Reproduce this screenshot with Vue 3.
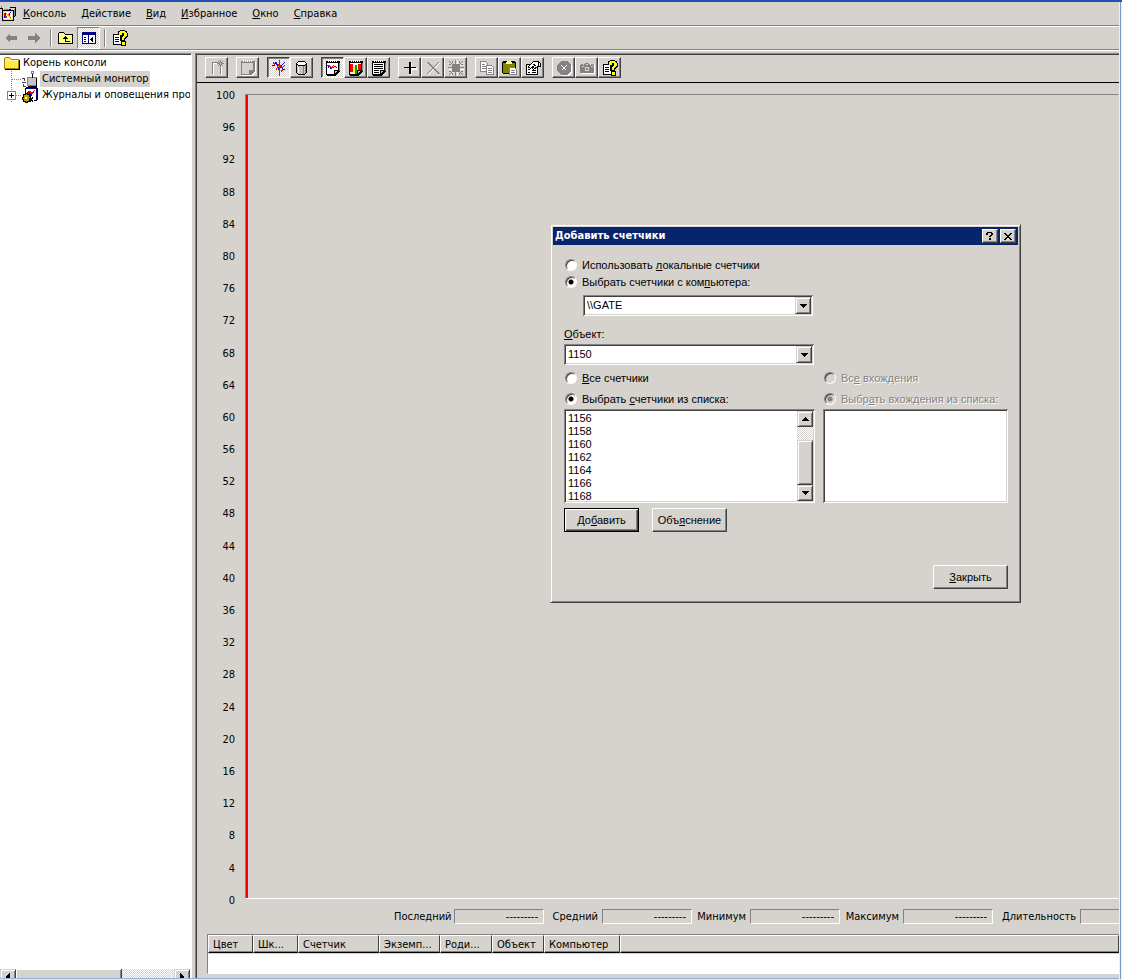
<template>
  <div class="screen">
    <div class="console">
      <nav class="menu-bar">
        <Icon name="console" />
        <button v-for="item in menu" :key="item[1]" type="button" class="menu-item">
          <u>{{ item[0] }}</u>{{ item[1] }}
        </button>
      </nav>

      <div class="main-toolbar">
        <button type="button" class="flat" aria-label="Назад" disabled><Icon name="back" /></button>
        <button type="button" class="flat" aria-label="Вперед" disabled><Icon name="forward" /></button>
        <span class="separator"></span>
        <button type="button" class="flat" aria-label="Вверх"><Icon name="up" /></button>
        <button type="button" class="flat pressed" aria-label="Дерево консоли"><Icon name="tree" /></button>
        <span class="separator"></span>
        <button type="button" class="flat" aria-label="Справка"><Icon name="help" /></button>
      </div>

      <div class="panes">
        <aside class="tree-pane">
          <ul class="tree">
            <li class="tree-root"><Icon name="folder" /><span>Корень консоли</span></li>
            <li class="tree-row">
              <span class="branch"></span>
              <Icon name="monitor" />
              <span class="tree-label selected">Системный монитор</span>
            </li>
            <li class="tree-row">
              <span class="branch"><button type="button" class="expander" aria-label="Развернуть"></button></span>
              <Icon name="logs" />
              <span class="tree-label">Журналы и оповещения производительности</span>
            </li>
          </ul>
          <div class="h-scroll">
            <span class="scroll-btn"><Icon name="arrowLeft" /></span>
            <span class="h-thumb"></span>
            <span class="h-track"></span>
            <span class="scroll-btn"><Icon name="arrowRight" /></span>
          </div>
        </aside>

        <main class="monitor">
          <div class="monitor-toolbar">
            <div v-for="(group, i) in tools" :key="i" class="tool-group">
              <button
                v-for="tool in group"
                :key="tool.icon"
                type="button"
                class="tool"
                :class="{ pressed: tool.pressed }"
                :aria-label="tool.label"
              >
                <Icon :name="tool.icon" />
              </button>
            </div>
          </div>

          <div class="chart">
            <div class="axis">
              <span v-for="n in axis" :key="n">{{ n }}</span>
            </div>
            <div class="plot"></div>
          </div>

          <div class="stats">
            <template v-for="name in stats" :key="name">
              <span>{{ name }}</span>
              <output>---------</output>
            </template>
          </div>

          <div class="legend">
            <table>
              <colgroup>
                <col v-for="col in columns" :key="col.name" :style="{ width: col.width + 'px' }" />
                <col />
              </colgroup>
              <thead>
                <tr>
                  <th v-for="col in columns" :key="col.name">{{ col.name }}</th>
                  <th></th>
                </tr>
              </thead>
              <tbody>
                <tr><td colspan="8"></td></tr>
              </tbody>
            </table>
          </div>
        </main>
      </div>
    </div>

    <section class="dialog" role="dialog" aria-labelledby="dialog-title">
      <header class="title-bar">
        <h1 id="dialog-title">Добавить счетчики</h1>
        <button type="button" aria-label="Справка"><Icon name="question" /></button>
        <button type="button" aria-label="Закрыть окно"><Icon name="close" /></button>
      </header>

      <form class="dialog-body" @submit.prevent>
        <label class="radio">
          <input v-model="source" type="radio" name="source" value="local" />
          <span>Использовать <u>л</u>окальные счетчики</span>
        </label>
        <label class="radio">
          <input v-model="source" type="radio" name="source" value="computer" />
          <span>Выбрать счетчики с ком<u>п</u>ьютера:</span>
        </label>
        <div class="combo computer">
          <select v-model="computer" aria-label="Компьютер">
            <option>\\GATE</option>
          </select>
          <span class="combo-btn"><Icon name="arrowDown" /></span>
        </div>

        <label class="field-label" for="object"><u>О</u>бъект:</label>
        <div class="combo">
          <select id="object" v-model="object">
            <option>1150</option>
          </select>
          <span class="combo-btn"><Icon name="arrowDown" /></span>
        </div>

        <div class="columns">
          <div class="column">
            <label class="radio">
              <input v-model="counters" type="radio" name="counters" value="all" />
              <span><u>В</u>се счетчики</span>
            </label>
            <label class="radio">
              <input v-model="counters" type="radio" name="counters" value="list" />
              <span>Выбрать <u>с</u>четчики из списка:</span>
            </label>
            <div class="list-box">
              <select v-model="counter" size="7" aria-label="Счетчики">
                <option v-for="id in counterList" :key="id" :value="id">{{ id }}</option>
              </select>
              <div class="v-scroll">
                <span class="scroll-btn"><Icon name="arrowUp" /></span>
                <span class="v-track"></span>
                <span class="v-thumb"></span>
                <span class="scroll-btn"><Icon name="arrowDown" /></span>
              </div>
            </div>
          </div>
          <div class="column">
            <label class="radio disabled">
              <input v-model="instances" type="radio" name="instances" value="all" disabled />
              <span>Вс<u>е</u> вхождения</span>
            </label>
            <label class="radio disabled">
              <input v-model="instances" type="radio" name="instances" value="list" disabled />
              <span>Выбр<u>а</u>ть вхождения из списка:</span>
            </label>
            <div class="list-box">
              <select size="7" aria-label="Вхождения" disabled></select>
            </div>
          </div>
        </div>

        <div class="actions">
          <button type="button" class="push default">До<u>б</u>авить</button>
          <button type="button" class="push">Объ<u>я</u>снение</button>
        </div>
        <div class="actions end">
          <button type="button" class="push"><u>З</u>акрыть</button>
        </div>
      </form>
    </section>
  </div>
</template>

<script setup>
import { h, ref } from "vue";

// every icon is a list of [fill, stroke, path] layers on a 16x16 grid
const notebook = [
  ["#000", "none", "M1 1h14v11h-1v1h-1v1h-1v1h-1v1H2v-1H1z"],
  ["#fff", "none", "M2 3h11v7h-4v4H2z"],
  ["#c6c3c6", "none", "M10 11h2v1h-1v1h-1z"],
  ["none", "#fff", "M3.5 0v2M5.5 0v2M7.5 0v2M9.5 0v2M11.5 0v2"],
  ["none", "#848284", "M14.5 3v8"],
];

const helpPage = [
  ["#fff", "#000", "M1.5 4.5h8v10h-8z"],
  ["none", "#000", "M3 7.5h4M3 9.5h4M3 11.5h4"],
  ["#000", "none", "M6 1h2V0h5v1h2v2h1v4h-1v1h-1v1h-1v2h1v5H9v-5H8V5H6z"],
  ["#ffff00", "none", "M7 2h1V1h5v1h1v1h1v3h-1v1h-1v1h-1v2h-2V7h1V6h1V3h-2v2H7zM10 12h3v3h-3z"],
];

const icons = {
  console: [
    ["#d6d3ce", "#000", "M2.5 4.5h11v10h-11z"],
    ["#fff", "none", "M4 6h8v7H4z"],
    ["none", "#000", "M0 2.5h3M2.5 3v2M5 3.5h6M9.5 1.5h6v8l-2 2"],
    ["none", "#848284", "M1.5 0v2M14.5 3v7M4 3.5h5"],
    ["none", "#0000ff", "M4 12l2-5 2 3 3-4"],
    ["none", "#ff0000", "M4 7l2 5 2-4 3 4"],
    ["none", "#e8d800", "M4 5l8 9"],
  ],
  back: [["#848284", "none", "M1 8l5-5v3h7v4H6v3z"]],
  forward: [["#848284", "none", "M13 8L8 3v3H1v4h7v3z"]],
  up: [
    ["#ffff84", "#000", "M.5 13.5V3.5l1-1h4l2 2h7v9z"],
    ["none", "#000", "M7.5 6v5.5h4M5 8.5h5M6 7.5h3"],
  ],
  tree: [
    ["#fff", "#000084", "M1.5 2.5h13v11h-13z"],
    ["#000084", "none", "M1 2h14v3H1zM7 5h1v9H7z"],
    ["none", "#000084", "M3 7.5h2M3 9.5h2M3 11.5h2"],
    ["#000", "none", "M12 6v7L9 9.5z"],
  ],
  help: helpPage,
  helpTool: helpPage,
  folder: [
    ["#ffe84a", "#a08000", "M.5 13.5V3.5l1-1h4l2 2h7v9z"],
    ["none", "#fff8b0", "M2 5.5h12"],
    ["none", "#000", "M1 14.5h14.5V5"],
  ],
  monitor: [
    ["#c6c3c6", "#848284", "M5.5 6.5h9v8h-9z"],
    ["none", "#000", "M10.5 2v5M14.5 7v8H6"],
    ["#fff", "#848284", "M9.5.5h2v2h-2z"],
    ["none", "#424142", "M0 7.5h3M2.5 8v2M0 11.5h4M1.5 13v2h2"],
  ],
  logs: [
    ["#fff", "#000084", "M3.5 1.5h11v12h-11z"],
    ["none", "#000", "M4 .5h11M15.5 1v11l-2 2"],
    ["none", "#0000ff", "M5 6l2-2 2 5 3-5"],
    ["none", "#ff0000", "M5 8l3-4 2 3 3-4"],
    ["#c0a000", "#000", "M1.5 7.5h2v-1h2v1h2v2h1v2h-1v3h-2v1h-2v-1h-2v-2h-1v-2h1z"],
    ["#fff", "none", "M3 10h2v2H3zM8 11h4v4H8z"],
    ["none", "#000", "M8 11l3 4M11 10l-3 5"],
  ],
  newSet: [
    ["none", "#fff", "M4.5 15V3.5h5M12.5 15V7"],
    ["none", "#848284", "M3.5 14V2.5h5M11.5 14V6M8 3.5h7M11.5 0v7M9 1l5 5M14 1L9 6"],
    ["#d6d3ce", "none", "M11 3h1v1h-1z"],
  ],
  clear: [
    ["#fff", "none", "M2 2h14v11h-1v1h-1v1h-1v1H2z"],
    ["#848284", "none", "M1 1h14v11h-1v1h-1v1h-1v1H1z"],
    ["#d6d3ce", "none", "M2 3h11v7h-4v4H2z"],
    ["none", "#fff", "M3.5 0v2M5.5 0v2M7.5 0v2M9.5 0v2M11.5 0v2"],
  ],
  activity: [
    ["none", "#0000ff", "M1 5.5h2l2-3 1 2 2 5 2-4 2 4h2M11 5l3-3"],
    ["none", "#ff0000", "M8.5 0v16M2 2l2 3M5 10l3-6 3 4 3-3M10 12l2-3"],
  ],
  database: [
    ["#c6c3c6", "#000", "M2.5 3.5l2-2h6l2 2v9l-2 2h-6l-2-2z"],
    ["#fff", "#000", "M2.5 3.5l2-2h6l2 2-2 2h-6z"],
    ["none", "#fff", "M4.5 7v6"],
    ["none", "#848284", "M9.5 6v8M11.5 5v8"],
  ],
  graph: [
    ...notebook,
    ["#ff0000", "none", "M2 5h3v1h1v1h1V6h1V5h1v1h1v1H9V6H8v2H6V7H4V6H2z"],
    ["#0000ff", "none", "M3 6h1v2H3zM5 7h1v1h1v1H5zM8 7h1v1H8zM10 6h1v1h-1zM11 7h1v1h-1z"],
  ],
  histogram: [
    ...notebook,
    ["#ff0000", "none", "M2 4h3v8H2zM10 4h3v6h-3z"],
    ["#ffff00", "none", "M5 7h2v6H5z"],
    ["#00a000", "none", "M7 5h2v9H7z"],
  ],
  report: [...notebook, ["none", "#000", "M3 4.5h9M3 6.5h9M3 8.5h9M3 10.5h5M3 12.5h5"]],
  add: [
    ["#fff", "none", "M8 3h2v5h5v2h-5v5H8z"],
    ["#000", "none", "M7 2h2v5h5v1H9v6H7V8H2V7h5z"],
  ],
  remove: [
    ["none", "#fff", "M3 3l12 12M15 3L3 15"],
    ["none", "#848284", "M2 2l12 12M3 2l12 12M14 2L2 14"],
  ],
  highlight: [
    ["none", "#fff", "M1 9h15M9 1v15M3 3l12 12M15 3L3 15"],
    ["#848284", "none", "M4 5h1V4h6v1h1v6h-1v1H5v-1H4z"],
    ["none", "#848284", "M0 7.5h16M7.5 0v16M1 1l4 4M15 1l-4 4M1 15l4-4M15 15l-4-4M1 4.5h2M13 4.5h2M1 11.5h2M13 11.5h2M4.5 1v2M11.5 1v2M4.5 13v2M11.5 13v2"],
  ],
  copy: [
    ["#fff", "#848284", "M1.5 1.5h5l2 2v8h-7z"],
    ["none", "#848284", "M3 4.5h3M3 6.5h4M3 8.5h4"],
    ["#fff", "#848284", "M7.5 5.5h5l2 2v7h-7z"],
    ["none", "#848284", "M9 8.5h4M9 10.5h4M9 12.5h4"],
  ],
  paste: [
    ["#000", "none", "M1 1h12v1h1v12H1v-1H0V2h1z"],
    ["#848200", "none", "M1 3h12v10H1z"],
    ["#ffff84", "none", "M4 2h1V1h4v1h1v2H4z"],
    ["#fff", "#848284", "M7.5 7.5h5l2 2v5h-7z"],
    ["none", "#848284", "M9 10.5h4M9 12.5h4"],
  ],
  properties: [
    ["#fff", "#000", "M1.5 4.5h11v10h-11z"],
    ["none", "#000", "M3 7.5h1M3 9.5h2M7 10.5h4M3 12.5h2M7 12.5h4"],
    ["#fff", "#000", "M3.5 6.5l5-5h4l3 2v3h-3l-4 3-1-1 2-3-4 3-1-1z"],
    ["none", "#000", "M13.5 1v6M8 4l3 2"],
  ],
  stop: [
    ["#fff", "none", "M6 2h6l4 4v6l-4 4H6l-4-4V6z"],
    ["#848284", "none", "M5 1h6l4 4v6l-4 4H5l-4-4V5z"],
    ["none", "#fff", "M5.5 5.5l5 5M10.5 5.5l-5 5"],
  ],
  camera: [
    ["#fff", "none", "M2 5h4l1-2h4l1 2h4v9H2z"],
    ["#848284", "none", "M1 5h1V4h2v1h1l1-2h4l1 2h1V4h2v1h1v8H1z"],
    ["none", "#d6d3ce", "M6.5 7.5h3v3h-3zM3 6.5h2M12 6.5h2M7 4.5h2"],
  ],
  question: [["#000", "none", "M5 4h5v1h1v2h-1v1H9v1H7V8h1V7h1V5H6v2H4V5h1zM7 10h2v2H7z"]],
  close: [["#000", "none", "M4 5h2v1h1v1h2V6h1V5h2v1h-1v1h-1v1H9v1h1v1h1v1h1v1h-2v-1H9v-1H7v1H6v1H4v-1h1v-1h1V9h1V8H6V7H5V6H4z"]],
  arrowUp: [["#000", "none", "M8 6h1v1h1v1h1v1h1v1H5V9h1V8h1V7h1z"]],
  arrowDown: [["#000", "none", "M5 6h7v1h-1v1h-1v1H9v1H8V9H7V8H6V7H5z"]],
  arrowLeft: [["#000", "none", "M10 4v8H9v-1H8v-1H7V9H6V7h1V6h1V5h1V4z"]],
  arrowRight: [["#000", "none", "M6 4v8h1v-1h1v-1h1V9h1V7H9V6H8V5H7V4z"]],
};

const Icon = (props) =>
  h(
    "svg",
    { class: "icon", viewBox: "0 0 16 16", width: 16, height: 16, "aria-hidden": "true" },
    icons[props.name].map(([fill, stroke, d]) => h("path", { fill, stroke, d }))
  );
Icon.props = ["name"];

const menu = [
  ["К", "онсоль"],
  ["Д", "ействие"],
  ["В", "ид"],
  ["И", "збранное"],
  ["О", "кно"],
  ["С", "правка"],
];

const tools = [
  [{ icon: "newSet", label: "Новый набор счетчиков" }],
  [{ icon: "clear", label: "Очистить экран" }],
  [
    { icon: "activity", label: "Текущая активность", pressed: true },
    { icon: "database", label: "Данные журнала" },
  ],
  [
    { icon: "graph", label: "График", pressed: true },
    { icon: "histogram", label: "Гистограмма" },
    { icon: "report", label: "Отчет" },
  ],
  [
    { icon: "add", label: "Добавить" },
    { icon: "remove", label: "Удалить" },
    { icon: "highlight", label: "Выделить" },
  ],
  [
    { icon: "copy", label: "Копировать" },
    { icon: "paste", label: "Вставить" },
    { icon: "properties", label: "Свойства" },
  ],
  [
    { icon: "stop", label: "Остановить" },
    { icon: "camera", label: "Обновить" },
    { icon: "helpTool", label: "Справка" },
  ],
];

const axis = Array.from({ length: 26 }, (_, i) => 100 - i * 4);
const stats = ["Последний", "Средний", "Минимум", "Максимум", "Длительность"];
const columns = [
  { name: "Цвет", width: 45 },
  { name: "Шк...", width: 45 },
  { name: "Счетчик", width: 81 },
  { name: "Экземп...", width: 61 },
  { name: "Роди...", width: 52 },
  { name: "Объект", width: 52 },
  { name: "Компьютер", width: 76 },
];
const counterList = [1156, 1158, 1160, 1162, 1164, 1166, 1168];

const source = ref("computer");
const computer = ref("\\\\GATE");
const object = ref("1150");
const counters = ref("list");
const counter = ref(null);
const instances = ref("list");
</script>

<style>
body {
  background: #d6d3ce;
}
</style>

<style scoped>
.screen {
  --face: #d6d3ce;
  --shade: #848284;
  --dark: #424142;
  --checker: repeating-conic-gradient(#fff 0 25%, #d6d3ce 0 50%) 0 0 / 2px 2px;
  position: relative;
  box-sizing: border-box;
  min-height: 100vh;
  display: flex;
  flex-direction: column;
  padding-right: 3px;
  border-top: 2px solid #2151b5;
  border-bottom: 1px solid #dbe7f7;
  background: linear-gradient(to right, #e7effb 1px, #7b9ac6 1px, #7b9ac6 2px, #e7effb 2px) right / 3px 100% no-repeat, var(--face);
  font: 11px/14px "DejaVu Sans Condensed", sans-serif;
  color: #000;
  overflow: hidden;
}

.screen *,
.screen *::before {
  box-sizing: border-box;
}

button,
select {
  font: inherit;
  color: inherit;
  border-radius: 0;
}

.icon {
  display: block;
  flex: none;
  shape-rendering: crispEdges;
}

.console {
  flex: 1;
  display: flex;
  flex-direction: column;
  border-bottom: 1px solid #94b2de;
}

.menu-bar {
  display: flex;
  align-items: center;
  height: 24px;
  border-bottom: 1px solid var(--shade);
}

.menu-item {
  padding: 1px 8px 0 7px;
  border: 0;
  background: none;
}

.main-toolbar {
  display: flex;
  align-items: center;
  height: 24px;
  border-top: 1px solid #fff;
  border-bottom: 1px solid var(--shade);
}

.flat {
  display: flex;
  align-items: center;
  justify-content: center;
  width: 23px;
  height: 22px;
  padding: 0;
  border: 1px solid transparent;
  background: none;
}

.flat.pressed {
  border-color: var(--shade) #fff #fff var(--shade);
  background: var(--checker);
}

.separator {
  width: 2px;
  height: 18px;
  margin: 0 2px 0 4px;
  border-left: 1px solid var(--shade);
  border-right: 1px solid #fff;
}

.panes {
  flex: 1;
  display: flex;
  border-top: 1px solid #fff;
  padding-top: 2px;
}

.tree-pane {
  display: flex;
  flex-direction: column;
  width: 192px;
  flex: none;
  border-top: 1px solid var(--shade);
  border-right: 1px solid #fff;
  box-shadow: inset 0 1px var(--dark);
  background: #fff;
}

.tree {
  flex: 1;
  list-style: none;
  margin: 0 1px 0 0;
  padding: 1px 0 0;
  overflow: hidden;
}

.tree li {
  display: flex;
  align-items: center;
  height: 16px;
  line-height: 16px;
  white-space: nowrap;
}

.tree-root {
  gap: 3px;
  padding-left: 4px;
}

.branch {
  position: relative;
  flex: none;
  width: 22px;
  height: 16px;
  background:
    repeating-linear-gradient(to right, var(--shade) 0 1px, transparent 1px 2px) 12px 8px / 10px 1px no-repeat,
    repeating-linear-gradient(to bottom, var(--shade) 0 1px, transparent 1px 2px) 11px 0 / 1px 16px no-repeat;
}

.expander {
  position: absolute;
  left: 7px;
  top: 4px;
  width: 9px;
  height: 9px;
  padding: 0;
  border: 1px solid var(--shade);
  background:
    linear-gradient(#000, #000) center / 5px 1px no-repeat,
    linear-gradient(#000, #000) center / 1px 5px no-repeat,
    #fff;
}

.tree-label {
  margin-left: 2px;
  padding: 0 2px;
}

.tree-label.selected {
  background: var(--face);
}

.h-scroll {
  display: flex;
  height: 9px;
  margin-right: 1px;
  overflow: hidden;
}

.scroll-btn,
.combo-btn {
  display: flex;
  align-items: center;
  justify-content: center;
  flex: none;
  width: 16px;
  height: 16px;
  overflow: hidden;
  background: var(--face);
  border: 1px solid;
  border-color: var(--face) var(--dark) var(--dark) var(--face);
  box-shadow: inset 1px 1px #fff, inset -1px -1px var(--shade);
}

.h-thumb {
  flex: 2;
  height: 16px;
  background: var(--face);
  border-right: 1px solid var(--dark);
  box-shadow: inset 1px 1px #fff, inset -1px 0 var(--shade);
}

.h-track {
  flex: 1;
  background: var(--checker);
}

.monitor {
  flex: 1;
  min-width: 0;
  display: flex;
  flex-direction: column;
  margin-left: 3px;
  border-top: 1px solid var(--shade);
  border-left: 1px solid var(--shade);
  box-shadow: inset 1px 1px var(--dark);
  padding-left: 1px;
  overflow: hidden;
}

.monitor-toolbar {
  display: flex;
  gap: 8px;
  height: 29px;
  padding: 3px 0 0 8px;
  border-bottom: 1px solid #000;
}

.tool-group {
  display: flex;
}

.tool {
  display: flex;
  align-items: center;
  justify-content: center;
  width: 23px;
  height: 21px;
  padding: 0;
  background: var(--face);
  border: 1px solid;
  border-color: #fff var(--dark) var(--dark) #fff;
  box-shadow: inset -1px -1px var(--shade);
}

.tool.pressed {
  border-color: var(--dark) #fff #fff var(--dark);
  box-shadow: inset 1px 1px var(--shade);
  background: var(--checker);
}

.chart {
  flex: 1;
  display: flex;
  gap: 10px;
  padding-top: 6px;
}

.axis {
  display: flex;
  flex-direction: column;
  justify-content: space-between;
  width: 38px;
  text-align: right;
}

.plot {
  flex: 1;
  margin: 5px 0 9px;
  border: 1px solid;
  border-color: var(--shade) transparent #fff var(--shade);
  background: linear-gradient(#f00, #f00) left / 2px 100% no-repeat;
}

.stats {
  display: grid;
  grid-template-columns: 60px 90px 58px 90px 58px 90px 63px 90px 87px 90px;
  margin: 1px 0 10px;
  padding-left: 197px;
  line-height: 16px;
  height: 15px;
  white-space: nowrap;
}

.stats span {
  padding-right: 4px;
  text-align: right;
}

.stats output {
  height: 15px;
  padding-right: 5px;
  border: 1px solid;
  border-color: var(--shade) #fff #fff var(--shade);
  line-height: 13px;
  text-align: right;
}

.legend {
  margin: 0 0 4px 10px;
  border-top: 1px solid var(--shade);
  border-left: 1px solid var(--shade);
  border-bottom: 1px solid #fff;
}

.legend table {
  width: 100%;
  table-layout: fixed;
  border-collapse: separate;
  border-spacing: 0;
}

.legend th {
  height: 18px;
  padding: 1px 0 0 4px;
  font-weight: normal;
  text-align: left;
  white-space: nowrap;
  overflow: hidden;
  border: 1px solid;
  border-color: #fff var(--dark) #000 #fff;
  box-shadow: inset 0 -1px var(--shade);
}

.legend td {
  height: 20px;
  padding: 0;
  background: #fff;
  border-top: 1px solid var(--face);
}

.dialog {
  position: absolute;
  left: 550px;
  top: 222px;
  width: 471px;
  padding: 2px;
  background: var(--face);
  border: 1px solid;
  border-color: var(--face) var(--dark) var(--dark) var(--face);
  box-shadow: inset 1px 1px #fff, inset -1px -1px var(--shade);
  font-family: "Liberation Sans", sans-serif;
}

.title-bar {
  display: flex;
  align-items: center;
  gap: 2px;
  height: 18px;
  padding: 0 2px;
  background: #08246b;
  color: #fff;
}

.title-bar h1 {
  flex: 1;
  margin: 0;
  font: bold 11px/14px "DejaVu Sans Condensed", sans-serif;
}

.title-bar button {
  display: flex;
  align-items: center;
  justify-content: center;
  width: 16px;
  height: 14px;
  padding: 0;
  overflow: hidden;
  background: var(--face);
  border: 1px solid;
  border-color: #fff var(--dark) var(--dark) #fff;
  box-shadow: inset -1px -1px var(--shade);
}

.dialog-body {
  display: flex;
  flex-direction: column;
  padding: 11px 10px 11px 11px;
}

.radio {
  display: flex;
  align-items: center;
  gap: 5px;
  height: 17px;
  padding-left: 1px;
  white-space: nowrap;
}

.radio input {
  appearance: none;
  flex: none;
  width: 12px;
  height: 12px;
  margin: 0;
  border: 1px solid;
  border-color: var(--shade) #fff #fff var(--shade);
  border-radius: 50%;
  background: #fff;
  box-shadow: inset 1px 1px var(--dark);
}

.radio input:checked {
  background: radial-gradient(circle, #000 2px, #fff 3px);
}

.radio.disabled {
  color: var(--shade);
  text-shadow: 1px 1px #fff;
}

.radio.disabled input {
  background: var(--face);
}

.radio.disabled input:checked {
  background: radial-gradient(circle, var(--shade) 2px, var(--face) 3px);
}

.combo,
.list-box {
  display: flex;
  padding: 2px;
  background: #fff;
  border: 0;
  box-shadow: inset 1px 1px var(--shade), inset -1px -1px #fff, inset 2px 2px var(--dark), inset -2px -2px var(--face);
}

.combo {
  position: relative;
  width: 250px;
  height: 21px;
}

.combo.computer {
  width: 230px;
  margin: 5px 0 0 19px;
}

.combo select {
  appearance: none;
  flex: 1;
  padding: 0 18px 2px 2px;
  border: 0;
  background: none;
}

.combo-btn {
  position: absolute;
  right: 2px;
  top: 2px;
  height: 17px;
  pointer-events: none;
}

.field-label {
  height: 17px;
  margin: 10px 0 1px;
  line-height: 17px;
}

.columns {
  display: grid;
  grid-template-columns: 251px 1fr;
  column-gap: 8px;
  margin-top: 4px;
}

.column .radio + .radio {
  margin-top: 4px;
}

.list-box {
  height: 94px;
  margin-top: 2px;
}

.list-box select {
  flex: 1;
  height: 90px;
  padding: 1px 0 0;
  border: 0;
  outline: 0;
  background: none;
  overflow: hidden;
}

.list-box option {
  min-height: 13px;
  height: 13px;
  padding: 0 2px;
  line-height: 13px;
}

.v-scroll {
  display: flex;
  flex-direction: column;
  width: 16px;
}

.v-track {
  flex: 1;
  background: var(--checker);
}

.v-thumb {
  height: 45px;
  background: var(--face);
  border: 1px solid;
  border-color: var(--face) var(--dark) var(--dark) var(--face);
  box-shadow: inset 1px 1px #fff, inset -1px -1px var(--shade);
}

.actions {
  display: flex;
  gap: 13px;
  margin-top: 5px;
}

.actions.end {
  justify-content: flex-end;
  margin-top: 33px;
}

.push {
  width: 75px;
  height: 24px;
  padding: 0;
  background: var(--face);
  border: 1px solid;
  border-color: #fff var(--dark) var(--dark) #fff;
  box-shadow: inset -1px -1px var(--shade);
}

.push.default {
  border-color: #000;
  box-shadow: inset 1px 1px #fff, inset -1px -1px var(--dark), inset -2px -2px var(--shade);
}
</style>
